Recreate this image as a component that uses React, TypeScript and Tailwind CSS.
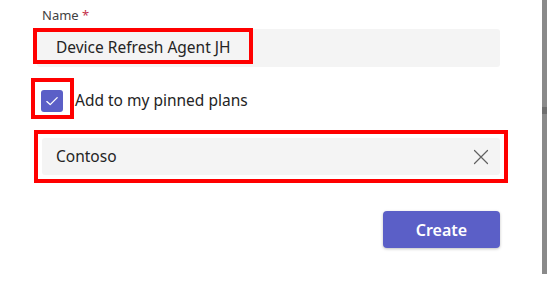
import React from 'react';

const font = { fontFamily: '"Noto Sans", "Open Sans", Arial, sans-serif' };

// red annotation frame drawn over a field
const Mark: React.FC<{ className: string }> = ({ className }) => (
  <div className={`pointer-events-none absolute border-[4px] border-[#ff0000] ${className}`} />
);

export default function App() {
  return (
    <div className="flex h-[281px] w-[553px] bg-white text-[#242424]" style={font}>
      <div className="flex w-[542px] flex-col">
        {/* Name label */}
        <div className="ml-[42px] mt-[6px] text-[13px] leading-[18px] text-[#424242]">
          Name <span className="text-[#c4314b]">*</span>
        </div>

        {/* Name input */}
        <div className="relative ml-[37px] mt-[5px] flex h-[38px] w-[463px] items-center rounded-[3px] bg-[#f4f4f4] pl-[19px]">
          <span className="text-[15.5px]">Device Refresh Agent JH</span>
          <Mark className="-left-[4px] -top-[1px] h-[36px] w-[220px]" />
        </div>

        {/* Pinned plans */}
        <div className="relative ml-[41px] mt-[22px] flex items-center gap-[12px]">
          <div className="flex h-[22px] w-[22px] items-center justify-center rounded-[3px] bg-[#5b5fc7]">
            <svg width="16" height="16" viewBox="0 0 16 16" fill="none">
              <path d="M2.8 8.6 L6.2 11.6 L13.2 4.6" stroke="white" strokeWidth="1.3" strokeLinecap="round" strokeLinejoin="round" />
            </svg>
          </div>
          <span className="text-[15.5px]">Add to my pinned plans</span>
          <Mark className="-left-[10px] -top-[11px] h-[41px] w-[43px]" />
        </div>

        {/* Team / group */}
        <div className="relative ml-[42px] mt-[26px] flex h-[37px] w-[458px] items-center justify-between rounded-[3px] bg-[#f4f4f4] pl-[14px] pr-[11px]">
          <span className="text-[15.5px]">Contoso</span>
          <svg width="16" height="16" viewBox="0 0 16 16" fill="none">
            <path d="M1.5 1.5 L14.5 14.5 M14.5 1.5 L1.5 14.5" stroke="#616161" strokeWidth="1.2" strokeLinecap="round" />
          </svg>
          <Mark className="-left-[8px] -top-[8px] h-[53px] w-[474px]" />
        </div>

        {/* Footer */}
        <div className="mt-[36px] flex w-[500px] justify-end">
          <button className="h-[37px] w-[117px] rounded-[4px] bg-[#5b5fc7] text-[16px] font-semibold text-white shadow-[0_1px_3px_rgba(0,0,0,0.25)]">
            Create
          </button>
        </div>
      </div>

      {/* window edge / scrollbar */}
      <div className="flex h-[274px] w-[5px] flex-col bg-[#8a8a8a]">
        <div className="mt-[107px] h-[7px] bg-[#6e6e6e]" />
      </div>
    </div>
  );
}
